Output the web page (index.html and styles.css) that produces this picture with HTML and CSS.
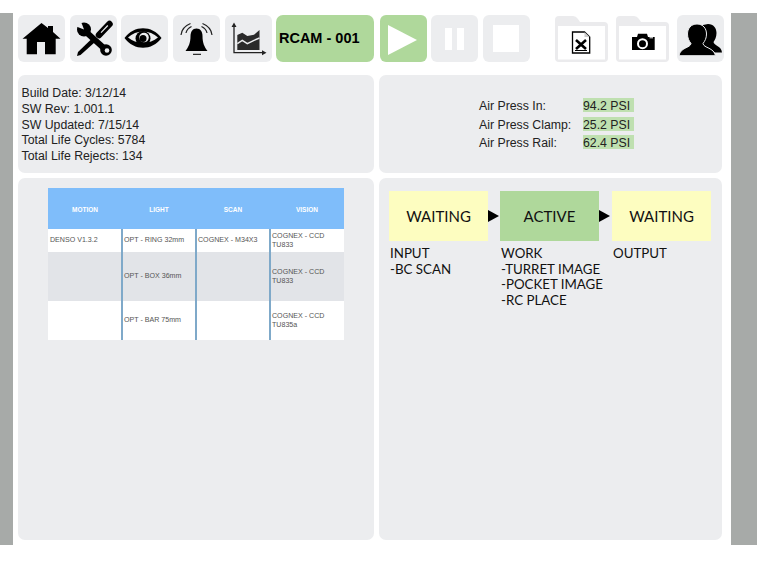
FILE: index.html
```html
<!DOCTYPE html>
<html lang="en">
<head>
  <meta charset="UTF-8" />
  <title>RCAM - 001</title>
  <link rel="stylesheet" href="styles.css">
</head>
<body>
  <div class="frame">
    <div class="toolbar">
      <div class="tool">
        <svg viewBox="0 0 47 47"><path d="M23.500 8 L30 13 V11 H35 V17 L42.500 23.700 H37.700 V39.300 H27 V27 H19 V39.300 H8.700 V23.700 H4.500 Z"/></svg>
      </div>
      <div class="tool">
        <svg viewBox="0 0 47 47">
          <circle cx="14" cy="14.500" r="7"/>
          <path d="M14 14.500 L5 11 L10 4 Z" fill="#ecedef"/>
          <path d="M16 17 L36 35" stroke="#000" stroke-width="6"/>
          <circle cx="36" cy="35" r="5.800"/>
          <circle cx="37" cy="35.500" r="2.300" fill="#ecedef"/>
          <path d="M39.500 9 L29 20" stroke="#000" stroke-width="6.500" stroke-linecap="round"/>
          <path d="M37.800 10.500 L31 17.700" stroke="#ecedef" stroke-width="1.200"/>
          <path d="M24.500 27.500 L21 24.500 L8 37 L7 41 L10.500 40 Z"/>
        </svg>
      </div>
      <div class="tool">
        <svg viewBox="0 0 47 47">
          <path d="M3.500 23 C13 10 31 10 40.500 23 C31 36 13 36 3.500 23 Z"/>
          <path d="M7 22.500 C15 14.500 29 14.500 37 22.500 C29 29.500 15 29.500 7 22.500 Z" fill="#ecedef"/>
          <circle cx="22" cy="23.500" r="7.500"/>
          <circle cx="23" cy="22.500" r="4.800" fill="#ecedef"/>
          <circle cx="22" cy="23.500" r="3.500"/>
        </svg>
      </div>
      <div class="tool">
        <svg viewBox="0 0 47 47">
          <path d="M23.500 13.500 C27.500 13.500 29.500 17 29.500 21 C29.500 28 31.500 32 34.500 36 H12.500 C15.500 32 17.500 28 17.500 21 C17.500 17 19.500 13.500 23.500 13.500 Z"/>
          <path d="M20 39.300 H28" stroke="#000" stroke-width="1"/>
          <g fill="none" stroke="#222" stroke-width="1.200">
            <path d="M13 18 C13.500 15.500 15.500 13 18.500 11.500"/>
            <path d="M34 18 C33.500 15.500 31.500 13 28.500 11.500"/>
            <path d="M8 20 C8.500 15 12.500 10.500 17.500 8.500"/>
            <path d="M39 20 C38.500 15 34.500 10.500 29.500 8.500"/>
          </g>
        </svg>
      </div>
      <div class="tool">
        <svg viewBox="0 0 47 47">
          <path d="M9 11 V37.700 H38" fill="none" stroke="#222" stroke-width="1.300"/>
          <path d="M9 7.500 L6.500 12 H11.500 Z M41.500 37.700 L37 35.200 V40.200 Z" fill="#222"/>
          <path d="M12.300 35 V20 L17.300 17.700 L22.300 21 L29 19.700 L34.500 15 V35 Z" fill="#2a2a2a"/>
          <path d="M12.300 28.700 L17.300 25.300 L22.300 28.700 L29 25.300 L34.500 23" fill="none" stroke="#ecedef" stroke-width="1.400"/>
        </svg>
      </div>
      <div class="machine">RCAM - 001</div>
      <div class="tool tool-go">
        <svg viewBox="0 0 47 47"><path d="M8 10 L37 25 L8 40 Z" fill="#fff"/></svg>
      </div>
      <div class="tool">
        <svg viewBox="0 0 47 47"><path d="M14 13 H21 V35 H14 Z M26 13 H33 V35 H26 Z" fill="#fff"/></svg>
      </div>
      <div class="tool">
        <svg viewBox="0 0 47 47"><path d="M10 10 H36 V37 H10 Z" fill="#fff"/></svg>
      </div>
      <div class="folder folder-first">
        <svg viewBox="0 0 53 47">
          <path d="M0 5 Q0 1 4 1 H18 Q21 1 23 4 L25 7 H49 Q53 7 53 11 V43 Q53 47 49 47 H4 Q0 47 0 43 Z" fill="#ebebed"/>
          <path d="M3 11 H50 V44.500 H3 Z" fill="#fff"/>
          <path d="M17.500 17 H29.500 L34.700 22 V38 H17.500 Z" fill="#fff" stroke="#000" stroke-width="1.300"/>
          <path d="M29.500 17 V22 H34.700 Z" fill="#ccc"/>
          <path d="M21 25 L31 34 M31 25 L21 34" stroke="#000" stroke-width="2.600"/>
          <path d="M20 35.500 H32" stroke="#000" stroke-width="1"/>
        </svg>
      </div>
      <div class="folder">
        <svg viewBox="0 0 53 47">
          <path d="M0 5 Q0 1 4 1 H18 Q21 1 23 4 L25 7 H49 Q53 7 53 11 V43 Q53 47 49 47 H4 Q0 47 0 43 Z" fill="#ebebed"/>
          <path d="M3 11 H50 V44.500 H3 Z" fill="#fff"/>
          <path d="M16 22 H21 L22 18.700 H31 L32 22 H38.700 V35 H16 Z"/>
          <circle cx="26.500" cy="28.700" r="4.500" fill="none" stroke="#fff" stroke-width="2"/>
          <path d="M33.500 22.800 H37" stroke="#fff" stroke-width="1"/>
        </svg>
      </div>
      <div class="tool tool-last">
        <svg viewBox="0 0 47 47">
          <path d="M31 9 C36.500 9 39.500 13 39.500 18 C39.500 22 38 25 36.500 27 C37 31 44.500 30.500 45 37.500 H38 L26 30 L26 10 Z"/>
          <path d="M20 9 C26 9 29.500 13.500 29.500 19 C29.500 23 28 26 26 28.500 C26.500 33 37 32.500 38.500 40.700 H2 C3 32.500 13.500 33 14 28.500 C12 26 10.500 23 10.500 19 C10.500 13.500 14 9 20 9 Z" stroke="#ecedef" stroke-width="1"/>
        </svg>
      </div>
    </div>

    <div class="panels">
      <div class="panel info">
        Build Date: 3/12/14<br/>
        SW Rev: 1.001.1<br/>
        SW Updated: 7/15/14<br/>
        Total Life Cycles: 5784<br/>
        Total Life Rejects: 134
      </div>

      <div class="panel pressure">
        <div class="pressure-grid">
          <span>Air Press In:</span><span class="reading">94.2 PSI</span>
          <span>Air Press Clamp:</span><span class="reading">25.2 PSI</span>
          <span>Air Press Rail:</span><span class="reading">62.4 PSI</span>
        </div>
      </div>

      <div class="panel devices">
        <table>
          <thead>
            <tr><th>MOTION</th><th>LIGHT</th><th>SCAN</th><th>VISION</th></tr>
          </thead>
          <tbody>
            <tr class="row-a"><td>DENSO V1.3.2</td><td>OPT - RING 32mm</td><td>COGNEX - M34X3</td><td>COGNEX - CCD TU833</td></tr>
            <tr class="row-b"><td></td><td>OPT - BOX 36mm</td><td></td><td>COGNEX - CCD TU833</td></tr>
            <tr class="row-c"><td></td><td>OPT - BAR 75mm</td><td></td><td>COGNEX - CCD TU835a</td></tr>
          </tbody>
        </table>
      </div>

      <div class="panel process">
        <div class="process-grid">
          <div class="state waiting">WAITING</div>
          <div class="arrow"></div>
          <div class="state active">ACTIVE</div>
          <div class="arrow"></div>
          <div class="state waiting">WAITING</div>
          <div class="steps">INPUT<br/>-BC SCAN</div>
          <div class="steps steps-mid">WORK<br/>-TURRET IMAGE<br/>-POCKET IMAGE<br/>-RC PLACE</div>
          <div class="steps steps-last">OUTPUT</div>
        </div>
      </div>
    </div>
  </div>
</body>
</html>
```
FILE: styles.css
```css
body {
  margin: 0;
  background: #fff;
  font-family: "Liberation Sans", Arial, sans-serif;
  color: #222;
}
.frame {
  box-sizing: border-box;
  width: 757px;
  height: 532px;
  margin-top: 13px;
  padding: 2px 0 5px 18px;
  background: linear-gradient(to right, #a7aaa8 13px, #fff 13px, #fff 731px, #a7aaa8 731px);
}
.toolbar {
  display: flex;
  align-items: flex-start;
  gap: 4.7px;
  height: 47px;
  margin-bottom: 13px;
}
.tool {
  flex: none;
  width: 47px;
  height: 47px;
  background: #ecedef;
  border-radius: 6px;
}
.tool svg, .folder svg {
  display: block;
}
.tool-go {
  background: #afd89b;
  margin-left: 0.5px;
}
.tool-last {
  margin-left: 3.300px;
}
.machine {
  flex: none;
  box-sizing: border-box;
  width: 98px;
  height: 47px;
  padding-left: 2.500px;
  line-height: 47px;
  background: #afd89b;
  border-radius: 7px;
  color: #000;
  font-size: 14.500px;
  font-weight: bold;
}
.folder {
  flex: none;
  width: 53px;
  height: 47px;
  margin-left: 3.300px;
}
.folder-first {
  margin-left: 20.200px;
}
.panels {
  display: grid;
  grid-template-columns: 356px 343px;
  grid-template-rows: 98px 362px;
  gap: 5px;
}
.panel {
  background: #ecedef;
  border-radius: 7px;
}
.info {
  padding: 11px 0 0 3.500px;
  font-size: 12.300px;
  line-height: 15.800px;
}
.pressure-grid {
  display: grid;
  grid-template-columns: 104px 51px;
  grid-auto-rows: 14px;
  row-gap: 4.500px;
  padding: 23px 0 0 100px;
  font-size: 12.300px;
  line-height: 16px;
}
.reading {
  background: #bfe0b0;
}
.devices {
  padding: 10px 0 0 30px;
}
table {
  width: 296px;
  table-layout: fixed;
  border-collapse: collapse;
  background: #fff;
  font-size: 7.100px;
  color: #555;
}
th {
  box-sizing: border-box;
  height: 41px;
  padding: 2px 0 0;
  background: #7fbdfa;
  color: #fff;
  font-size: 6.500px;
  font-weight: bold;
}
td {
  padding: 0 1px;
  line-height: 9px;
  border-left: 2px solid #7fa9c9;
}
td:first-child {
  padding-left: 2px;
  border-left: none;
}
.row-a { height: 23px; }
.row-b { height: 49px; background: #e2e4e8; }
.row-c { height: 39px; }
.process {
  padding: 13px 0 0 10px;
}
.process-grid {
  display: grid;
  grid-template-columns: 99px 12px 99px 13px 99px;
  grid-template-rows: 50px auto;
  font-family: Lato, "Open Sans", sans-serif;
  color: #111;
}
.state {
  display: flex;
  align-items: center;
  justify-content: center;
  font-size: 15px;
}
.waiting { background: #fdfdc0; }
.active { background: #afd89b; }
.arrow {
  align-self: center;
  justify-self: start;
  width: 0;
  height: 0;
  border-left: 11px solid #000;
  border-top: 6px solid transparent;
  border-bottom: 6px solid transparent;
}
.steps {
  padding: 5px 0 0 1px;
  font-size: 13.300px;
  line-height: 15.700px;
  white-space: nowrap;
}
.steps-mid { grid-column: 3; }
.steps-last { grid-column: 5; }
```
